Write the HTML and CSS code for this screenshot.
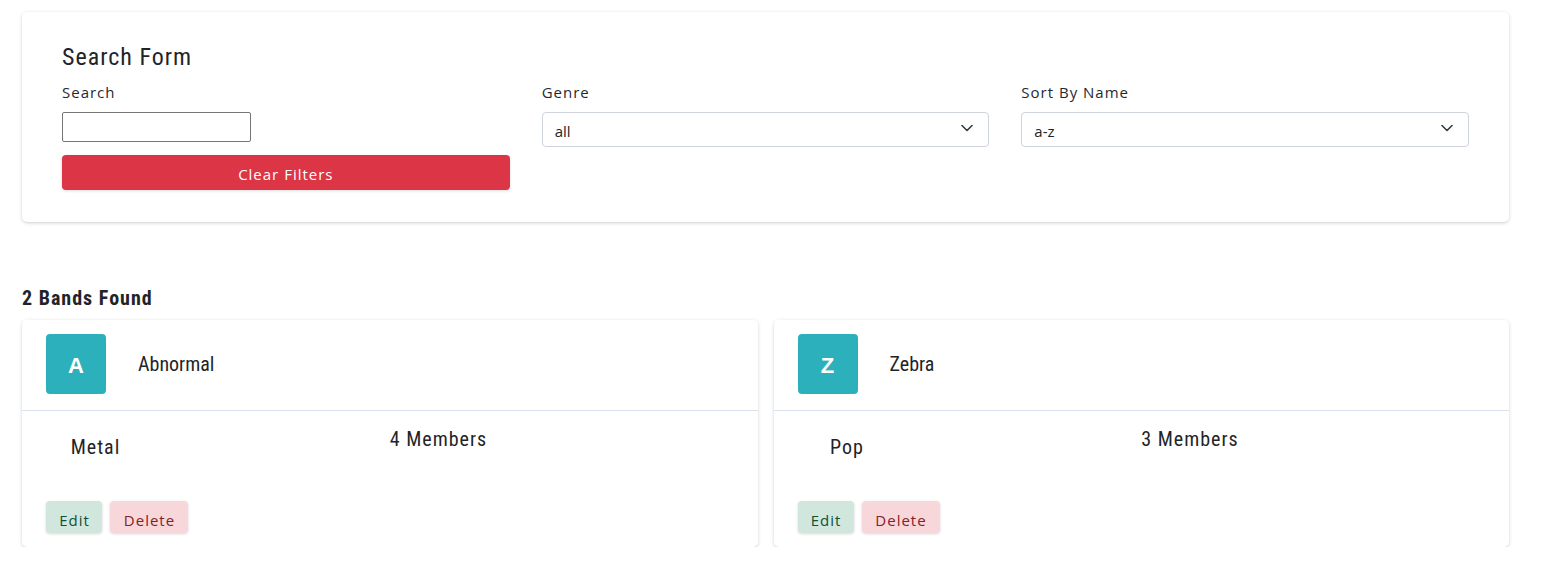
FILE: index.html
```html
<!DOCTYPE html>
<html lang="en">
<head>
<meta charset="utf-8">
<title>Bands</title>
<link rel="stylesheet" href="styles.css">
</head>
<body>
<main class="page">
  <section class="search-card">
    <h2 class="search-title">Search Form</h2>
    <div class="form-grid">
      <div class="field">
        <label class="field-label" for="q">Search</label>
        <input id="q" class="search-input" type="text">
        <button class="clear-btn" type="button">Clear Filters</button>
      </div>
      <div class="field">
        <label class="field-label" for="genre">Genre</label>
        <div class="select">
          <span class="select-value">all</span>
          <svg class="chev" width="12" height="8" viewBox="0 0 12 8"><path d="M1 1.5 L6 6.5 L11 1.5" fill="none" stroke="#343a40" stroke-width="1.6" stroke-linecap="round" stroke-linejoin="round"/></svg>
        </div>
      </div>
      <div class="field">
        <label class="field-label" for="sort">Sort By Name</label>
        <div class="select">
          <span class="select-value">a-z</span>
          <svg class="chev" width="12" height="8" viewBox="0 0 12 8"><path d="M1 1.5 L6 6.5 L11 1.5" fill="none" stroke="#343a40" stroke-width="1.6" stroke-linecap="round" stroke-linejoin="round"/></svg>
        </div>
      </div>
    </div>
  </section>

  <h3 class="found">2 Bands Found</h3>

  <div class="bands">
    <article class="band">
      <header class="band-head">
        <div class="avatar">A</div>
        <div class="band-name">Abnormal</div>
      </header>
      <div class="band-body">
        <div class="genre"><span class="genre-text">Metal</span></div>
        <div class="members">4 Members</div>
      </div>
      <div class="actions">
        <button class="btn btn-edit" type="button">Edit</button>
        <button class="btn btn-delete" type="button">Delete</button>
      </div>
    </article>
    <article class="band">
      <header class="band-head">
        <div class="avatar">Z</div>
        <div class="band-name">Zebra</div>
      </header>
      <div class="band-body">
        <div class="genre"><span class="genre-text">Pop</span></div>
        <div class="members">3 Members</div>
      </div>
      <div class="actions">
        <button class="btn btn-edit" type="button">Edit</button>
        <button class="btn btn-delete" type="button">Delete</button>
      </div>
    </article>
  </div>
</main>
</body>
</html>
```

FILE: styles.css
```css
* { box-sizing: border-box; }
html, body { margin: 0; padding: 0; background: #ffffff; }
body {
  font-family: "Open Sans", "Noto Sans", sans-serif;
  color: #1f2428;
}
.page {
  padding: 12px 41px 0 22px;
}
.search-card {
  background: #fff;
  border-radius: 5px;
  box-shadow: 0 1px 4px rgba(0,0,0,0.14), 0 1px 2px rgba(0,0,0,0.06);
  padding: 31px 40px 32px 40px;
}
.search-title {
  margin: 0;
  font-family: "Roboto Condensed", Roboto, sans-serif;
  font-weight: 400;
  font-size: 24px;
  line-height: 29px;
  letter-spacing: 1px;
  color: #1f2428;
}
.form-grid {
  display: grid;
  grid-template-columns: 1fr 1fr 1fr;
  column-gap: 32px;
  margin-top: 10px;
}
.field {
  display: flex;
  flex-direction: column;
  align-items: flex-start;
}
.field-label {
  font-size: 15px;
  line-height: 20px;
  letter-spacing: 1px;
  color: #1f2933;
  margin-bottom: 10px;
}
.search-input {
  width: 189px;
  height: 30px;
  border: 1px solid #767676;
  border-radius: 2px;
  padding: 0 4px;
  margin: 0;
}
.clear-btn {
  width: 100%;
  height: 35px;
  margin-top: 13px;
  border: none;
  border-radius: 4px;
  background: #dc3545;
  color: #fff;
  font-family: "Open Sans", "Noto Sans", sans-serif;
  font-size: 15px;
  letter-spacing: 1px;
  padding-top: 3px;
  box-shadow: 0 1px 3px rgba(0,0,0,0.14);
}
.select {
  width: 100%;
  height: 35px;
  border: 1px solid #ced4da;
  border-radius: 4px;
  display: flex;
  align-items: center;
  justify-content: space-between;
  padding: 0 15px 0 12px;
}
.select-value {
  font-size: 15px;
  color: #212529;
  padding-top: 2px;
}
.chev { display: block; margin-top: -3px; }

.found {
  margin: 64px 0 10px 0;
  font-family: "Roboto Condensed", Roboto, sans-serif;
  font-weight: 700;
  font-size: 20px;
  line-height: 24px;
  letter-spacing: 1px;
  color: #1f2428;
}
.bands {
  display: grid;
  grid-template-columns: 1fr 1fr;
  column-gap: 16px;
}
.band {
  background: #fff;
  border-radius: 5px;
  box-shadow: 0 1px 4px rgba(0,0,0,0.14), 0 1px 2px rgba(0,0,0,0.06);
  display: flex;
  flex-direction: column;
}
.band-head {
  display: flex;
  align-items: center;
  padding: 14px 24px 16px 24px;
  border-bottom: 1px solid #d9e2ec;
}
.avatar {
  width: 60px;
  height: 60px;
  border-radius: 4px;
  background: #2cb1bc;
  color: #fff;
  font-family: "Liberation Sans", Arial, sans-serif;
  font-weight: 700;
  font-size: 22px;
  display: flex;
  align-items: center;
  justify-content: center;
  padding-top: 4px;
}
.band-name {
  margin-left: 32px;
  font-family: "Roboto Condensed", Roboto, sans-serif;
  font-size: 20px;
  letter-spacing: 0;
  color: #1f2428;
}
.band-body {
  display: grid;
  grid-template-columns: 1fr 1fr;
  padding: 16px 24px 0 24px;
}
.genre {
  padding-top: 8px;
}
.genre-text {
  display: inline-block;
  width: 99px;
  text-align: center;
  font-family: "Roboto Condensed", Roboto, sans-serif;
  font-size: 20px;
  letter-spacing: 1px;
  color: #1f2428;
}
.members {
  font-family: "Roboto Condensed", Roboto, sans-serif;
  font-size: 20px;
  letter-spacing: 1px;
  color: #1f2428;
}
.actions {
  display: flex;
  gap: 8px;
  padding: 42px 24px 14px 24px;
}
.btn {
  height: 32px;
  border: none;
  border-radius: 4px;
  padding: 5px 0 0 1px;
  text-align: center;
  font-family: "Open Sans", "Noto Sans", sans-serif;
  font-size: 15px;
  letter-spacing: 1px;
  box-shadow: 0 1px 3px rgba(0,0,0,0.16);
}
.btn-edit { width: 56px; background: #d1e7dd; color: #0f5132; }
.btn-delete { width: 78px; background: #f8d7da; color: #842029; }
```
